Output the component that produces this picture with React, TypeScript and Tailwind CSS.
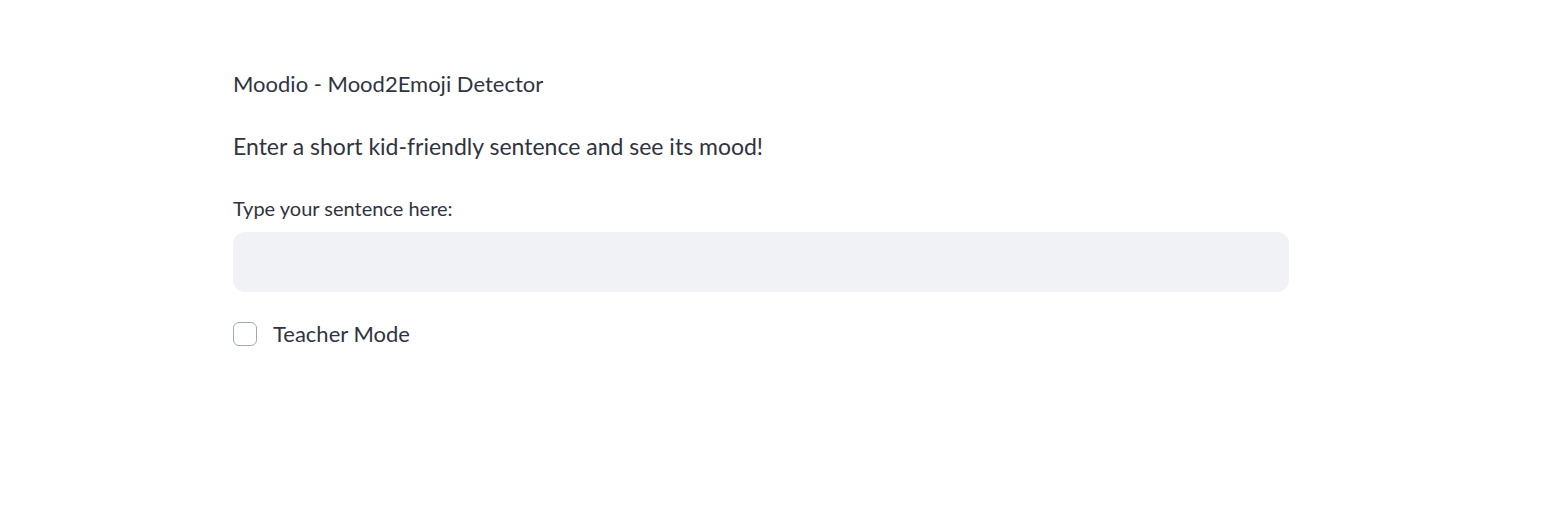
export default function App() {
  return (
    <div className="min-h-[527px] w-full bg-white text-[#31333f]" style={{ fontFamily: "Lato, 'Noto Sans', sans-serif" }}>
      <div className="ml-[233px] w-[1056px] pt-[65px] flex flex-col">
        <div className="h-[38px] leading-[38px] text-[22px]">Moodio - Mood2Emoji Detector</div>
        <div className="mt-[24px] h-[38px] leading-[38px] text-[23px]">Enter a short kid-friendly sentence and see its mood!</div>
        <div className="mt-[28px] h-[30px] leading-[30px] text-[20px]">Type your sentence here:</div>
        <div className="mt-[9px] h-[60px] w-full rounded-[12px] bg-[#f0f2f6]" />
        <div className="mt-[30px] flex items-center h-[24px]">
          <div className="w-[24px] h-[24px] rounded-[6px] border border-[#a3a8b4] bg-white" />
          <span className="ml-[16px] text-[22px] leading-[24px]">Teacher Mode</span>
        </div>
      </div>
    </div>
  );
}
